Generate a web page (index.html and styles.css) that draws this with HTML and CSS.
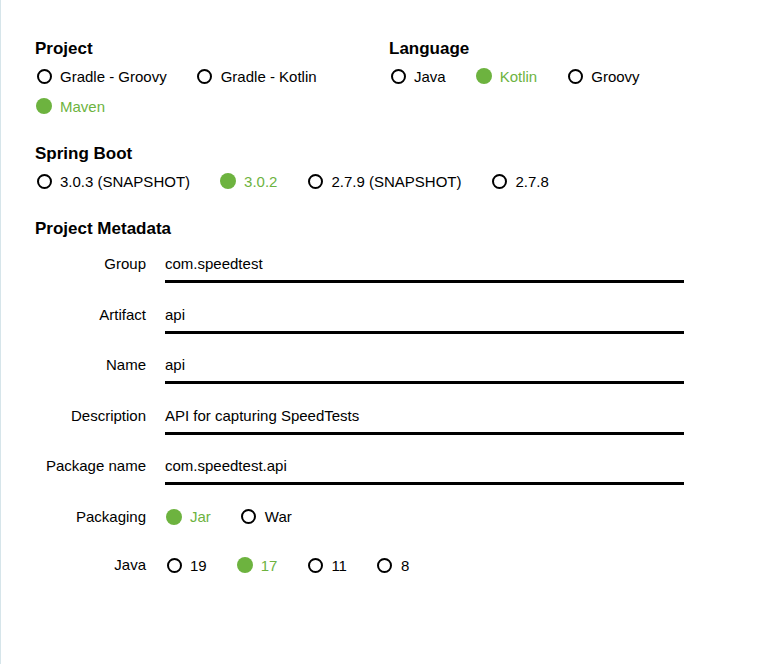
FILE: index.html
```html
<!DOCTYPE html>
<html>
<head>
<meta charset="utf-8">
<link rel="stylesheet" href="styles.css">
</head>
<body>
<div class="page">
  <div class="cols">
    <div class="group">
      <div class="heading">Project</div>
      <div class="radios">
        <span class="radio"><span class="dot"></span>Gradle - Groovy</span>
        <span class="radio"><span class="dot"></span>Gradle - Kotlin</span>
        <span class="radio checked"><span class="dot"></span>Maven</span>
      </div>
    </div>
    <div class="group">
      <div class="heading">Language</div>
      <div class="radios">
        <span class="radio"><span class="dot"></span>Java</span>
        <span class="radio checked"><span class="dot"></span>Kotlin</span>
        <span class="radio"><span class="dot"></span>Groovy</span>
      </div>
    </div>
  </div>
  <div class="group section">
    <div class="heading">Spring Boot</div>
    <div class="radios">
      <span class="radio"><span class="dot"></span>3.0.3 (SNAPSHOT)</span>
      <span class="radio checked"><span class="dot"></span>3.0.2</span>
      <span class="radio"><span class="dot"></span>2.7.9 (SNAPSHOT)</span>
      <span class="radio"><span class="dot"></span>2.7.8</span>
    </div>
  </div>
  <div class="group section">
    <div class="heading">Project Metadata</div>
    <div class="meta">
      <div class="field"><label class="label">Group</label><div class="input">com.speedtest</div></div>
      <div class="field"><label class="label">Artifact</label><div class="input">api</div></div>
      <div class="field"><label class="label">Name</label><div class="input">api</div></div>
      <div class="field"><label class="label">Description</label><div class="input">API for capturing SpeedTests</div></div>
      <div class="field"><label class="label">Package name</label><div class="input">com.speedtest.api</div></div>
      <div class="field radio-field"><label class="label">Packaging</label>
        <div class="radios">
          <span class="radio checked"><span class="dot"></span>Jar</span>
          <span class="radio"><span class="dot"></span>War</span>
        </div>
      </div>
      <div class="field radio-field"><label class="label">Java</label>
        <div class="radios">
          <span class="radio"><span class="dot"></span>19</span>
          <span class="radio checked"><span class="dot"></span>17</span>
          <span class="radio"><span class="dot"></span>11</span>
          <span class="radio"><span class="dot"></span>8</span>
        </div>
      </div>
    </div>
  </div>
</div>
</body>
</html>
```
FILE: styles.css
```css
html, body {
  margin: 0;
  padding: 0;
  background: #fff;
}
body {
  font-family: "Liberation Sans", Arial, sans-serif;
  color: #000;
  font-size: 15px;
}
.page {
  min-height: 664px;
  box-sizing: border-box;
  border-left: 1px solid #d6e5ea;
  padding: 39px 0 0 34px;
}
.cols {
  display: grid;
  grid-template-columns: 354px 354px;
}
.heading {
  font-size: 17px;
  font-weight: bold;
  line-height: 20px;
  margin-bottom: 2px;
}
.section {
  margin-top: 23px;
}
.radios {
  display: flex;
  flex-wrap: wrap;
}
.radio {
  display: flex;
  align-items: center;
  height: 30px;
  margin-right: 29px;
  white-space: nowrap;
}
.dot {
  width: 16px;
  height: 16px;
  margin-left: 1px;
  margin-right: 8px;
  display: flex;
  align-items: center;
  justify-content: center;
}
.dot::before {
  content: "";
  width: 15px;
  height: 15px;
  box-sizing: border-box;
  border: 2px solid #000;
  border-radius: 50%;
}
.radio.checked {
  color: #6db33f;
}
.radio.checked .dot::before {
  width: 16px;
  height: 16px;
  border: none;
  background: #6db33f;
}
.meta {
  padding-top: 7px;
}
.field {
  display: flex;
  align-items: flex-start;
  margin-bottom: 15.5px;
}
.label {
  width: 111px;
  text-align: right;
  margin-right: 19px;
  line-height: 32px;
  flex: none;
}
.input {
  width: 519px;
  height: 32px;
  line-height: 32px;
  border-bottom: 3px solid #000;
}
.radio-field {
  margin-top: 16.5px;
  margin-bottom: 18.5px;
}
.radio-field .label {
  line-height: 30px;
}
```
